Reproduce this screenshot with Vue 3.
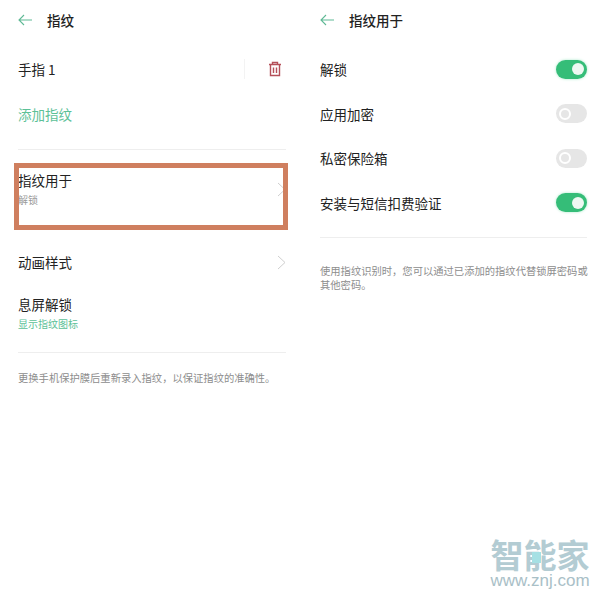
<template>
  <div class="page">
    <section class="panel left">
      <header class="head">
        <svg class="back" width="14" height="12" viewBox="0 0 14 12"><path d="M6 1 1 6l5 5M1 6h13" /></svg>
        <h1>指纹</h1>
      </header>

      <div class="row finger">
        <span>手指 1</span>
        <div class="finger-tools">
          <i class="vline"></i>
          <svg class="trash" width="14" height="16" viewBox="0 0 14 16">
            <path d="M1 3.500h12M4.500 3.500V1.500h5v2M2.500 3.500v11h9v-11M5.500 6.500v5.500M8.500 6.500v5.500" />
          </svg>
        </div>
      </div>
      <div class="row add">添加指纹</div>
      <div class="line line-left"></div>

      <div class="item used">
        <div>
          <div class="name">指纹用于</div>
          <div class="sub">解锁</div>
        </div>
        <svg class="chev" width="9" height="15" viewBox="0 0 9 15"><path d="m1 1 7 6.500-7 6.500" /></svg>
      </div>
      <div class="row anim">
        <span>动画样式</span>
        <svg class="chev" width="9" height="15" viewBox="0 0 9 15"><path d="m1 1 7 6.500-7 6.500" /></svg>
      </div>
      <div class="item off-screen">
        <div class="name">息屏解锁</div>
        <div class="sub green">显示指纹图标</div>
      </div>
      <div class="line line-bottom"></div>
      <p class="note">更换手机保护膜后重新录入指纹&#65292;以保证指纹的准确性。</p>

      <div class="highlight"></div>
    </section>

    <section class="panel right">
      <header class="head">
        <svg class="back" width="14" height="12" viewBox="0 0 14 12"><path d="M6 1 1 6l5 5M1 6h13" /></svg>
        <h1>指纹用于</h1>
      </header>

      <div class="toggles">
        <div v-for="t in toggles" :key="t.label" class="toggle-row">
          <span>{{ t.label }}</span>
          <div :class="['switch', t.on ? 'on' : 'off']"><i></i></div>
        </div>
      </div>
      <div class="line line-right"></div>
      <p class="note note-right">使用指纹识别时&#65292;您可以通过已添加的指纹代替锁屏密码或其他密码。</p>
    </section>

    <div class="mark">
      <div class="mark-name">智能家</div>
      <div class="mark-url">www.znj.com</div>
      <i class="mark-dot"></i>
    </div>
  </div>
</template>

<script setup>
const toggles = [
  { label: '解锁', on: true },
  { label: '应用加密', on: false },
  { label: '私密保险箱', on: false },
  { label: '安装与短信扣费验证', on: true }
]
</script>

<style>
html, body {
  margin: 0;
  background: #fff;
}
</style>

<style scoped>
.page {
  position: relative;
  width: 600px;
  height: 600px;
  display: flex;
  overflow: hidden;
  background: #fff;
  color: #222;
  font-family: "Noto Sans CJK SC", "Noto Sans", sans-serif;
  font-size: 13.500px;
}

.panel {
  position: relative;
  width: 300px;
  box-sizing: border-box;
}

.left {
  padding: 0 14px 0 18px;
}

.right {
  padding: 0 13px 0 20px;
}

.head {
  height: 40px;
  display: flex;
  align-items: center;
  gap: 15px;
}

.head h1 {
  margin: 0;
  font-size: 13.500px;
  font-weight: 500;
}

.back {
  fill: none;
  stroke: #5fb995;
  stroke-width: 1.100;
}

.row {
  display: flex;
  align-items: center;
  justify-content: space-between;
  height: 44px;
}

.finger {
  margin-top: 7px;
}

.finger-tools {
  display: flex;
  align-items: center;
  gap: 23px;
}

.vline {
  width: 1px;
  height: 20px;
  background: #f3f3f3;
}

.trash {
  fill: none;
  stroke: #b5505a;
  stroke-width: 1.400;
  margin-right: 4px;
}

.add {
  margin-top: 1px;
  color: #5cc197;
}

.line {
  height: 1px;
  background: #eeeeee;
}

.line-left {
  margin-top: 13px;
}

.item {
  display: flex;
  flex-direction: column;
}

.used {
  flex-direction: row;
  justify-content: space-between;
  align-items: center;
  margin-top: 20px;
}

.name {
  line-height: 20px;
}

.sub {
  margin-top: 2px;
  font-size: 10px;
  line-height: 16px;
  color: #9a9a9a;
}

.green {
  color: #5cc197;
}

.chev {
  fill: none;
  stroke: #cfcfcf;
  stroke-width: 1;
}

.anim {
  margin-top: 32px;
}

.off-screen {
  margin-top: 10px;
}

.line-bottom {
  margin-top: 20px;
}

.note {
  margin: 16px 0 0;
  font-size: 10.300px;
  line-height: 17px;
  color: #8d8d8d;
}

.toggles {
  margin-top: 7px;
}

.toggle-row {
  display: flex;
  align-items: center;
  justify-content: space-between;
  height: 44.500px;
}

.switch {
  width: 31px;
  height: 19px;
  border-radius: 10px;
  display: flex;
  align-items: center;
  box-sizing: border-box;
  padding: 0 3px;
}

.switch i {
  display: block;
  box-sizing: border-box;
  width: 12px;
  height: 12px;
  border-radius: 50%;
}

.on {
  justify-content: flex-end;
  background: #35bd78;
  box-shadow: 0 0 3px #a8e8c8;
}

.on i {
  background: #eef8f2;
}

.off {
  background: #e6e6e6;
}

.off i {
  border: 2.500px solid #fff;
  background: #e6e6e6;
}

.line-right {
  margin-top: 12px;
}

.note-right {
  margin: 26px -2px 0 0;
  line-height: 14px;
}

/* red box drawn over the screenshot */
.highlight {
  position: absolute;
  left: 14px;
  top: 163px;
  width: 274px;
  height: 67px;
  box-sizing: border-box;
  border: 5px solid #cf7f5f;
}

.mark {
  position: absolute;
  right: 9px;
  bottom: 11px;
  width: 102px;
  text-align: center;
  color: #b3ccd3;
}

.mark-name {
  font-size: 33px;
  line-height: 38px;
  font-weight: 700;
}

.mark-url {
  font-family: "Liberation Sans", sans-serif;
  font-size: 17px;
  line-height: 16px;
  color: #a9c0c7;
  white-space: nowrap;
}

.mark-dot {
  position: absolute;
  left: 43px;
  top: 17px;
  width: 9px;
  height: 11px;
  background: #a5e0e4;
}
</style>
